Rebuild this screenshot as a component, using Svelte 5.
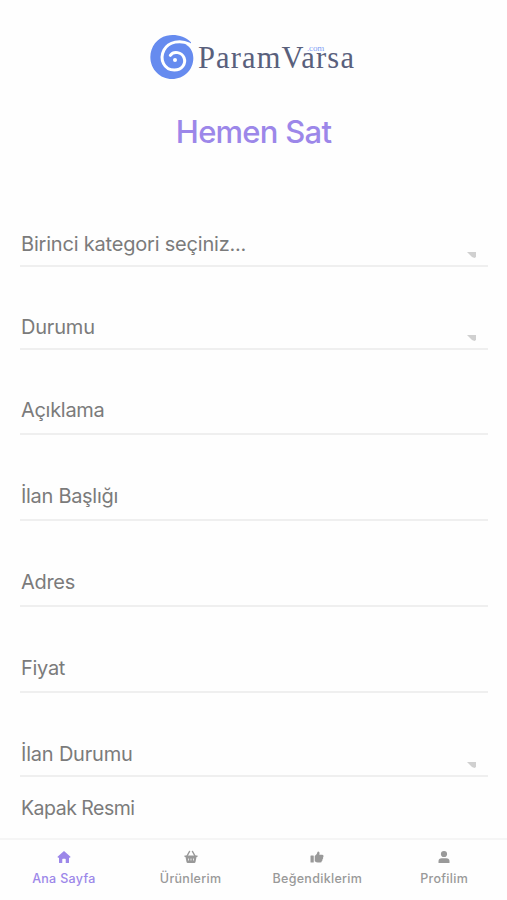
<script lang="ts">
	type Field = { label: string; kind: 'select' | 'input' };

	const fields: Field[] = [
		{ label: 'Birinci kategori seçiniz...', kind: 'select' },
		{ label: 'Durumu', kind: 'select' },
		{ label: 'Açıklama', kind: 'input' },
		{ label: 'İlan Başlığı', kind: 'input' },
		{ label: 'Adres', kind: 'input' },
		{ label: 'Fiyat', kind: 'input' },
		{ label: 'İlan Durumu', kind: 'select' }
	];

	const tabs = [
		{ label: 'Ana Sayfa', icon: 'home' },
		{ label: 'Ürünlerim', icon: 'basket' },
		{ label: 'Beğendiklerim', icon: 'like' },
		{ label: 'Profilim', icon: 'user' }
	];

	let active = $state('home');
</script>

<div class="screen">
	<header>
		<div class="logo">
			<svg class="swirl" width="44" height="46" viewBox="0 0 132 138">
				<path
					d="M123 25C104 6 76 0 50 5C22 11 1 38 1 69C1 106 30 135 66 135C102 135 130 108 130 72C130 54 122 40 108 32C114 28 119 27 123 29Z"
					fill="#668bef"
				/>
				<path
					d="M118 30C92 17 56 22 42 48C27 77 43 108 73 108C96 108 109 89 102 71C95 54 71 50 61 64"
					fill="none"
					stroke="#fff"
					stroke-width="9"
					stroke-linecap="round"
				/>
				<circle cx="75" cy="78" r="6" fill="#fff" />
			</svg>
			<span class="brand">ParamVarsa<span class="dotcom">.com</span></span>
		</div>
		<h1>Hemen Sat</h1>
	</header>

	<form>
		{#each fields as field}
			<div class="field {field.kind}">
				<span>{field.label}</span>
				{#if field.kind === 'select'}
					<svg class="caret" width="9" height="6" viewBox="0 0 9 6">
						<path d="M0 0H9V5L7.500 6L5 5Z" fill="#d0d0d0" />
					</svg>
				{/if}
			</div>
		{/each}
		<div class="cover">Kapak Resmi</div>
	</form>

	<nav>
		{#each tabs as tab}
			<button class:active={active === tab.icon} onclick={() => (active = tab.icon)}>
				<svg width="14" height="14" viewBox="0 0 28 28" fill="currentColor">
					{#if tab.icon === 'home'}
						<path
							d="M14 2L27 13.500Q27 15.500 25 15.500H24V25Q24 26 23 26H17.500V19Q17.500 17.500 16 17.500H12Q10.500 17.500 10.500 19V26H5Q4 26 4 25V15.500H3Q1 15.500 1 13.500Z"
						/>
					{:else if tab.icon === 'basket'}
						<path
							fill-rule="evenodd"
							d="M1 11H27V14H25L23 24Q22.500 26 20.500 26H7.500Q5.500 26 5 24L3 14H1ZM8.500 17V21H10V17ZM13.250 17V21H14.750V17ZM18 17V21H19.500V17Z"
						/>
						<path
							d="M6 12L11 3M22 12L17 3"
							fill="none"
							stroke="currentColor"
							stroke-width="3"
							stroke-linecap="round"
						/>
					{:else if tab.icon === 'like'}
						<path
							d="M2 11H6.500Q7.500 11 7.500 12V24Q7.500 25 6.500 25H2Q1 25 1 24V12Q1 11 2 11ZM9.500 12L13.500 8L15 4Q15.500 2.500 17 3Q20 4 19 8L18.500 9.500H24Q27 9.500 27 12Q27 14 26 15Q27 17.500 25 18.500Q25.500 21.500 23.500 22Q24 25 20 25H16Q12.500 25 9.500 22.500Z"
						/>
					{:else}
						<circle cx="14" cy="8" r="6.200" />
						<path d="M3 26V23Q3 16.500 9.500 16.500H18.500Q25 16.500 25 23V26Z" />
					{/if}
				</svg>
				<span>{tab.label}</span>
			</button>
		{/each}
	</nav>
</div>

<style>
	:global(body) {
		margin: 0;
		background: #fefefe;
	}

	.screen {
		display: flex;
		flex-direction: column;
		height: 900px;
		box-sizing: border-box;
		overflow: hidden;
		font-family: Inter, 'Liberation Sans', sans-serif;
		background: #fefefe;
	}

	header {
		display: flex;
		flex-direction: column;
		align-items: center;
		height: 184px;
		box-sizing: border-box;
		padding-top: 34px;
	}

	.logo {
		display: flex;
		height: 46px;
		margin-right: 2px;
	}

	.brand {
		position: relative;
		margin-left: 4px;
		font-family: 'Liberation Serif', serif;
		font-size: 30.5px;
		line-height: 48px;
		letter-spacing: 1.15px;
		color: #59607c;
	}

	.dotcom {
		position: absolute;
		top: 9px;
		left: 109px;
		font-size: 9px;
		line-height: 10px;
		letter-spacing: -0.1px;
		color: #85a3f5;
	}

	h1 {
		margin: 32px 0 0;
		font-size: 31px;
		font-weight: 500;
		line-height: 40px;
		letter-spacing: -0.75px;
		color: #9c87e9;
	}

	form {
		display: flex;
		flex-direction: column;
		flex: 1;
		padding: 0 19px 0 20px;
		font-size: 20px;
		line-height: 24px;
		letter-spacing: -0.3px;
		color: #7b7b7b;
	}

	.field {
		display: flex;
		align-items: flex-end;
		justify-content: space-between;
		height: 86px;
		box-sizing: border-box;
		padding: 0 12px 11px 1px;
		border-bottom: 2px solid #efefef;
	}

	.select {
		height: 83px;
		padding-bottom: 9px;
		letter-spacing: -0.2px;
	}

	.select + .input {
		height: 85px;
	}

	.input + .select {
		height: 84px;
	}

	.caret {
		margin-bottom: -2px;
	}

	.cover {
		padding: 19px 1px 0;
		font-size: 19.5px;
		letter-spacing: -0.5px;
	}

	nav {
		display: grid;
		grid-template-columns: repeat(4, 1fr);
		height: 62px;
		box-sizing: border-box;
		border-top: 2px solid #f5f5f5;
	}

	button {
		display: flex;
		flex-direction: column;
		align-items: center;
		padding: 10px 0 0 1px;
		border: 0;
		background: none;
		font: 500 12.5px/16px Inter, sans-serif;
		letter-spacing: 0.3px;
		color: #999;
		cursor: pointer;
	}

	button svg {
		margin-bottom: 7px;
	}

	.active {
		color: #9c87e9;
	}
</style>
